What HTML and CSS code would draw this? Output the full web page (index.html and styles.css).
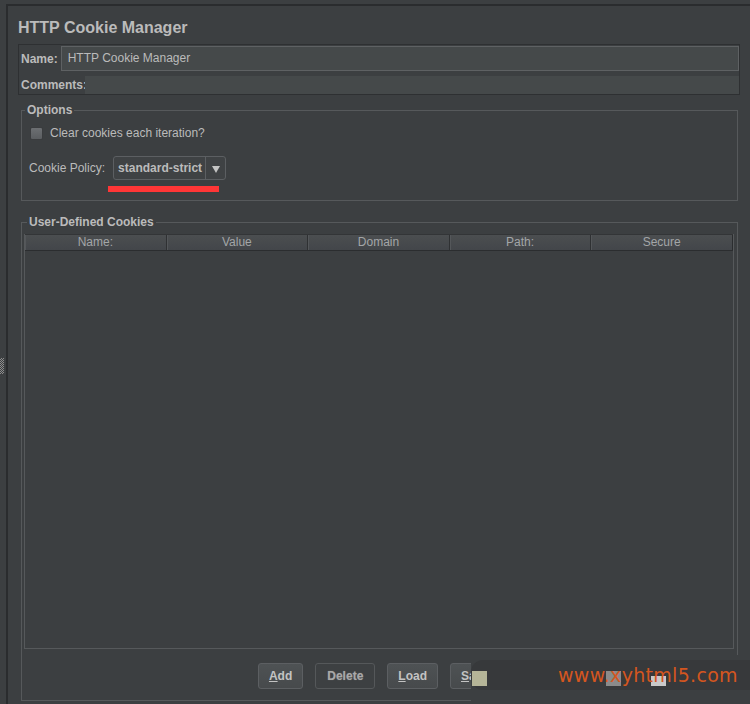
FILE: index.html
```html
<!DOCTYPE html>
<html>
<head>
<meta charset="utf-8">
<link rel="stylesheet" href="styles.css">
</head>
<body>
<div class="app">
  <div class="gutter"><div class="grip"></div></div>
  <div class="main">
    <h1 class="title">HTTP Cookie Manager</h1>
    <div class="meta">
      <div class="row row-name"><span class="lbl">Name:</span><div class="field field-name">HTTP Cookie Manager</div></div>
      <div class="row row-comments"><span class="lbl">Comments:</span><div class="field field-comments"></div></div>
    </div>
    <fieldset class="group options">
      <legend>Options</legend>
      <div class="check-row"><span class="checkbox"></span><span>Clear cookies each iteration?</span></div>
      <div class="policy-row">
        <span>Cookie Policy:</span>
        <div class="combo">
          <span class="combo-text">standard-strict</span>
          <span class="combo-arrow"><i class="tri"></i></span>
          <span class="mark"></span>
        </div>
      </div>
    </fieldset>
    <fieldset class="group cookies">
      <legend>User-Defined Cookies</legend>
      <div class="table">
        <div class="thead">
          <div class="th">Name:</div>
          <div class="th">Value</div>
          <div class="th">Domain</div>
          <div class="th">Path:</div>
          <div class="th">Secure</div>
        </div>
        <div class="tbody"></div>
      </div>
      <div class="buttons">
        <button class="btn"><u>A</u>dd</button>
        <button class="btn btn-disabled">Delete</button>
        <button class="btn"><u>L</u>oad</button>
        <button class="btn"><u>S</u>ave</button>
      </div>
    </fieldset>
  </div>
  <div class="wm">
    <div class="band"></div>
    <span class="sq sq-beige"></span>
    <span class="sq sq-gray"></span>
    <span class="sq sq-light"></span>
    <div class="wm-text">www.xyhtml5.com</div>
  </div>
</div>
</body>
</html>
```
FILE: styles.css
```css
html, body {
  margin: 0;
  padding: 0;
  background: #3c3f41;
}
body {
  font-family: "Liberation Sans", Arial, sans-serif;
  font-size: 12px;
  color: #bbbbbb;
}
.app {
  position: relative;
  display: flex;
  width: 750px;
  height: 704px;
  overflow: hidden;
}
.gutter {
  width: 6px;
  flex: none;
}
.grip {
  margin-top: 358px;
  width: 4px;
  height: 16px;
  background: repeating-conic-gradient(#8c8c8c 0 25%, #3c3f41 0 50%) 0 0 / 2px 2px;
}
.main {
  flex: 1;
  margin-top: 4px;
  border-top: 2px solid #2a2c2e;
  border-left: 2px solid #2a2c2e;
  padding: 0 10px;
  display: flex;
  flex-direction: column;
}
.title {
  margin: 0;
  padding-top: 12px;
  font-size: 16px;
  line-height: 20px;
  font-weight: bold;
  color: #bbbbbb;
}
.meta {
  margin-top: 6px;
  border: 1px solid #2e3032;
  padding: 1px 0 0 1px;
  display: flex;
  flex-direction: column;
  gap: 5px;
}
.row {
  display: flex;
  align-items: center;
}
.lbl {
  font-weight: bold;
  padding-left: 1px;
}
.row-name { gap: 3px; height: 25px; }
.row-comments { gap: 0; height: 18px; }
.field {
  flex: 1;
  box-sizing: border-box;
  background: #45494a;
}
.field-name {
  height: 25px;
  border: 1px solid #5e6163;
  padding-left: 6px;
  line-height: 23px;
}
.field-comments {
  height: 18px;
  margin-left: -2px;
}
.group {
  margin: 0 2px 0 3px;
  padding: 0;
  border: 1px solid #56595b;
  min-inline-size: 0;
}
.group legend {
  margin-left: 3px;
  padding: 0 2px;
  line-height: 14px;
  font-weight: bold;
  color: #bbbbbb;
}
.options {
  margin-top: 8px;
  padding: 9px 0 20px 0;
}
.check-row {
  display: flex;
  align-items: center;
  gap: 7px;
  height: 14px;
  margin-left: 8px;
}
.checkbox {
  width: 13px;
  height: 13px;
  box-sizing: border-box;
  border: 1px solid #3a3c3e;
  border-radius: 2px;
  background: linear-gradient(#6c6f72, #5b5e61);
}
.policy-row {
  margin-top: 16px;
  margin-left: 7px;
  display: flex;
  align-items: center;
  gap: 8px;
  height: 24px;
}
.combo {
  position: relative;
  display: flex;
  height: 24px;
  box-sizing: border-box;
  border: 1px solid #5c5f62;
  border-radius: 3px;
  background: #3f4244;
}
.combo-text {
  font-weight: bold;
  line-height: 22px;
  padding: 0 3px 0 4px;
}
.combo-arrow {
  width: 19px;
  border-left: 1px solid #5c5f62;
  display: flex;
  align-items: center;
  justify-content: center;
}
.tri {
  width: 0;
  height: 0;
  border-left: 4px solid transparent;
  border-right: 4px solid transparent;
  border-top: 7px solid #c4c4c4;
  margin-top: 2px;
}
.mark {
  position: absolute;
  left: -6px;
  top: 29px;
  width: 111px;
  height: 6px;
  background: #ff3636;
}
.cookies {
  margin-top: 14px;
  padding: 5px 3px 11px 2px;
}
.table {
  border: 1px solid #56595b;
  border-top: none;
}
.thead {
  display: grid;
  grid-template-columns: repeat(5, 1fr);
  height: 17px;
  box-sizing: border-box;
  border-bottom: 1px solid #2b2d2f;
  border-top: 1px solid #333537;
  background: linear-gradient(#4b4e50, #43464a);
}
.th {
  text-align: center;
  line-height: 15px;
  color: #a3a6a8;
  border-right: 1px solid #2f3133;
  box-shadow: inset 1px 0 0 #54575a;
}
.th:last-child { border-right: 1px solid #2b2d2f; }
.tbody {
  height: 397px;
  background: #3c3f41;
}
.buttons {
  margin-top: 14px;
  display: flex;
  justify-content: center;
  gap: 12px;
}
.btn {
  height: 26px;
  box-sizing: border-box;
  padding: 0 10px;
  border: 1px solid #5c5f62;
  border-radius: 3px;
  background: linear-gradient(#4e5254, #474a4c);
  color: #c3c3c3;
  font-family: "Liberation Sans", Arial, sans-serif;
  font-size: 12px;
  font-weight: bold;
}
.btn-disabled {
  padding: 0 11px;
  background: #3d4042;
  border-color: #55585a;
  color: #a8a8a8;
  text-shadow: 0 0 1px #777;
}
.wm {
  position: absolute;
  left: 471px;
  top: 655px;
  width: 279px;
  height: 49px;
  background: #3c3f41;
}
.band {
  margin-top: 5px;
  height: 30px;
  background: #37393b;
  border-radius: 12px 0 0 12px;
}
.sq {
  position: absolute;
}
.sq-beige { left: 1px; top: 16px; width: 15px; height: 15px; background: #b5b598; }
.sq-gray { left: 135px; top: 16px; width: 15px; height: 15px; background: #8a8a8a; }
.sq-light { left: 180px; top: 21px; width: 15px; height: 10px; background: #c8c8c8; }
.wm-text {
  position: absolute;
  left: 87px;
  top: 5px;
  font-family: "DejaVu Sans", Verdana, sans-serif;
  font-size: 19px;
  letter-spacing: 0.3px;
  line-height: 30px;
  color: #d4561f;
}
```
